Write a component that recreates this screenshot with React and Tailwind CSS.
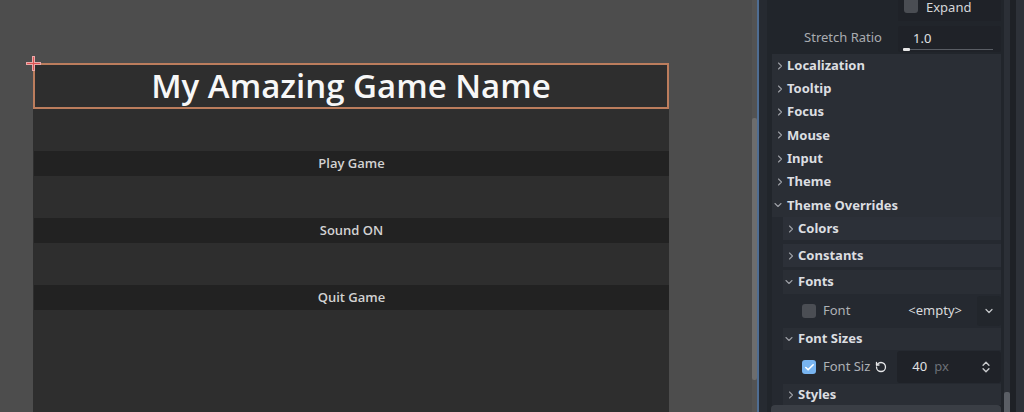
import { ChevronRight, ChevronDown, ChevronsUpDown, Check, RotateCcw } from 'lucide-react';

const editorFont = { fontFamily: '"Noto Sans", "Open Sans", sans-serif' };
const gameFont = { fontFamily: '"Open Sans", "Noto Sans", sans-serif' };

function GameButton({ label }) {
  return (
    <div className="h-[25px] bg-[#222222] flex items-center justify-center text-[13px] font-semibold text-[#d2d2d2]">
      {label}
    </div>
  );
}

function Section({ label }) {
  return (
    <div className="h-[23.3px] flex items-center pl-[2px] gap-[1px]">
      <ChevronRight size={12} strokeWidth={2.2} className="text-[#9da0a6]" />
      <span className="text-[13px] font-bold text-[#dcdee1]">{label}</span>
    </div>
  );
}

function SubHeader({ label, open, className = '' }) {
  return (
    <div className={`flex items-center ${open ? 'gap-[3px]' : 'pl-[2px] gap-[1px]'} ${className}`}>
      {open ? (
        <ChevronDown size={12} strokeWidth={2.2} className="text-[#9da0a6]" />
      ) : (
        <ChevronRight size={12} strokeWidth={2.2} className="text-[#9da0a6]" />
      )}
      <span className="text-[13px] font-bold text-[#dcdee1]">{label}</span>
    </div>
  );
}

function Canvas() {
  return (
    <div className="relative w-[752px] h-full bg-[#4d4d4d] pt-[63px] pl-[33px]" style={gameFont}>
      <div className="w-[636px] h-[400px] bg-[#2e2e2e] flex flex-col">
        <div className="h-[46px] border-2 border-[#bc7d5d] flex items-center justify-center text-[33px] font-semibold text-[#f7f7f7] leading-none">
          <span className="-mt-[1px]">My Amazing Game Name</span>
        </div>
        <div className="flex flex-col gap-[42px] pt-[42px] pl-[1px]">
          <GameButton label="Play Game" />
          <GameButton label="Sound ON" />
          <GameButton label="Quit Game" />
        </div>
      </div>
      {/* pivot cross */}
      <div className="absolute left-[26px] top-[56px] w-[15px] h-[15px]">
        <div className="absolute left-0 top-[6px] w-[15px] h-[3px] bg-[#eaa8a8]" />
        <div className="absolute left-[6px] top-0 w-[3px] h-[15px] bg-[#eaa8a8]" />
        <div className="absolute left-[1px] top-[7px] w-[13px] h-[1px] bg-[#de5454]" />
        <div className="absolute left-[7px] top-[1px] w-[1px] h-[13px] bg-[#de5454]" />
      </div>
    </div>
  );
}

function CanvasScroll() {
  return (
    <div className="flex h-full">
      <div className="w-[5px] h-full bg-[#535353] flex flex-col pt-[118px]">
        <div className="h-[262px] bg-[#6d6d6d] rounded-[2px]" />
      </div>
      <div className="w-[2px] h-full bg-[#4f6d92]" />
    </div>
  );
}

function Inspector() {
  return (
    <div className="flex h-full w-[265px] bg-[#21252b]" style={editorFont}>
      <div className="w-[8px] h-full bg-[#262a31]" />
      <div className="w-[5px] h-full" />
      <div className="w-[229px] flex flex-col">
        {/* Expand */}
        <div className="h-[21px] flex">
          <div className="ml-[126px] flex-1 bg-[#1f2228] flex items-start gap-[8px] pl-[6px]">
            <div className="w-[14px] h-[13px] bg-[#4a4d53] rounded-b-[3px]" />
            <span className="text-[13px] leading-[15px] text-[#d6d7d9]">Expand</span>
          </div>
        </div>
        {/* Stretch ratio */}
        <div className="h-[33px] flex pt-[5px] pb-[2px]">
          <div className="w-[110px] flex items-center justify-end text-[13px] text-[#a9acb1] pb-[3px]">
            Stretch Ratio
          </div>
          <div className="ml-[16px] flex-1 bg-[#1f2228] rounded-[3px] flex flex-col pl-[15px] pr-[8px]">
            <span className="text-[13px] leading-[18px] pt-[3px] text-[#e0e1e3]">1.0</span>
            <div className="mt-[2px] -ml-[10px] h-[1px] bg-[#595d64] relative">
              <div className="absolute left-0 -top-[1px] w-[7px] h-[3px] bg-[#e6e6e6] rounded-[1px]" />
            </div>
          </div>
        </div>
        {/* categories */}
        <div className="bg-[#2a2e35] flex flex-col">
          <Section label="Localization" />
          <Section label="Tooltip" />
          <Section label="Focus" />
          <Section label="Mouse" />
          <Section label="Input" />
          <Section label="Theme" />
          <div className="h-[23.3px] flex items-center gap-[3px]">
            <ChevronDown size={12} strokeWidth={2.2} className="text-[#9da0a6]" />
            <span className="text-[13px] font-bold text-[#dcdee1]">Theme Overrides</span>
          </div>
        </div>
        {/* overrides */}
        <div className="flex-1 bg-[#252930] pl-[11px] flex flex-col">
          <SubHeader label="Colors" className="h-[23px] bg-[#2c3038]" />
          <div className="h-[4px]" />
          <SubHeader label="Constants" className="h-[23px] bg-[#2c3038]" />
          <div className="h-[3px]" />
          <SubHeader label="Fonts" open className="h-[24px] bg-[#2a2e35]" />
          <div className="h-[34px] flex items-center">
            <div className="ml-[19px] w-[14px] h-[14px] bg-[#4b4e54] rounded-[3px]" />
            <span className="ml-[7px] text-[13px] text-[#aeb1b6]">Font</span>
            <span className="ml-[58px] text-[13px] text-[#dadbdd]">&lt;empty&gt;</span>
            <div className="ml-auto w-[24px] h-[30px] bg-[#22262c] rounded-[3px] flex items-center justify-center">
              <ChevronDown size={12} strokeWidth={2.4} className="text-[#c8cacd]" />
            </div>
          </div>
          <SubHeader label="Font Sizes" open className="h-[22px] bg-[#2a2e35]" />
          <div className="h-[34px] flex items-center">
            <div className="ml-[19px] w-[14px] h-[14px] bg-[#78b4f0] rounded-[3px] flex items-center justify-center">
              <Check size={11} strokeWidth={3.5} className="text-white" />
            </div>
            <span className="ml-[7px] text-[13px] text-[#aeb1b6]">Font Siz</span>
            <RotateCcw size={12} strokeWidth={2.6} className="ml-[5px] text-[#e6e7e9]" />
            <div className="ml-[10px] flex-1 h-[32px] bg-[#1f2228] rounded-[3px] flex items-center pl-[15px] pr-[8px]">
              <span className="text-[13px] text-[#e0e1e3]">40</span>
              <span className="ml-[7px] text-[13px] text-[#6c7077]">px</span>
              <ChevronsUpDown size={14} strokeWidth={2.4} className="ml-auto text-[#c8cacd]" />
            </div>
          </div>
          <SubHeader label="Styles" className="h-[21px] bg-[#2a2e35]" />
        </div>
        <div className="h-[7px] -ml-[1px] bg-[#3a3e45] rounded-t-[4px]" />
      </div>
      <div className="w-[3px] h-full" />
      <div className="w-[6px] h-full bg-[#2b2f36] flex flex-col pt-[392px]">
        <div className="flex-1 bg-[#5a5e65] rounded-t-[2px]" />
      </div>
      <div className="w-[6px] h-full bg-[#1e2126]" />
      <div className="w-[8px] h-full bg-[#2d3138]" />
    </div>
  );
}

export default function App() {
  return (
    <div className="flex w-[1024px] h-[412px] overflow-hidden">
      <Canvas />
      <CanvasScroll />
      <Inspector />
    </div>
  );
}
